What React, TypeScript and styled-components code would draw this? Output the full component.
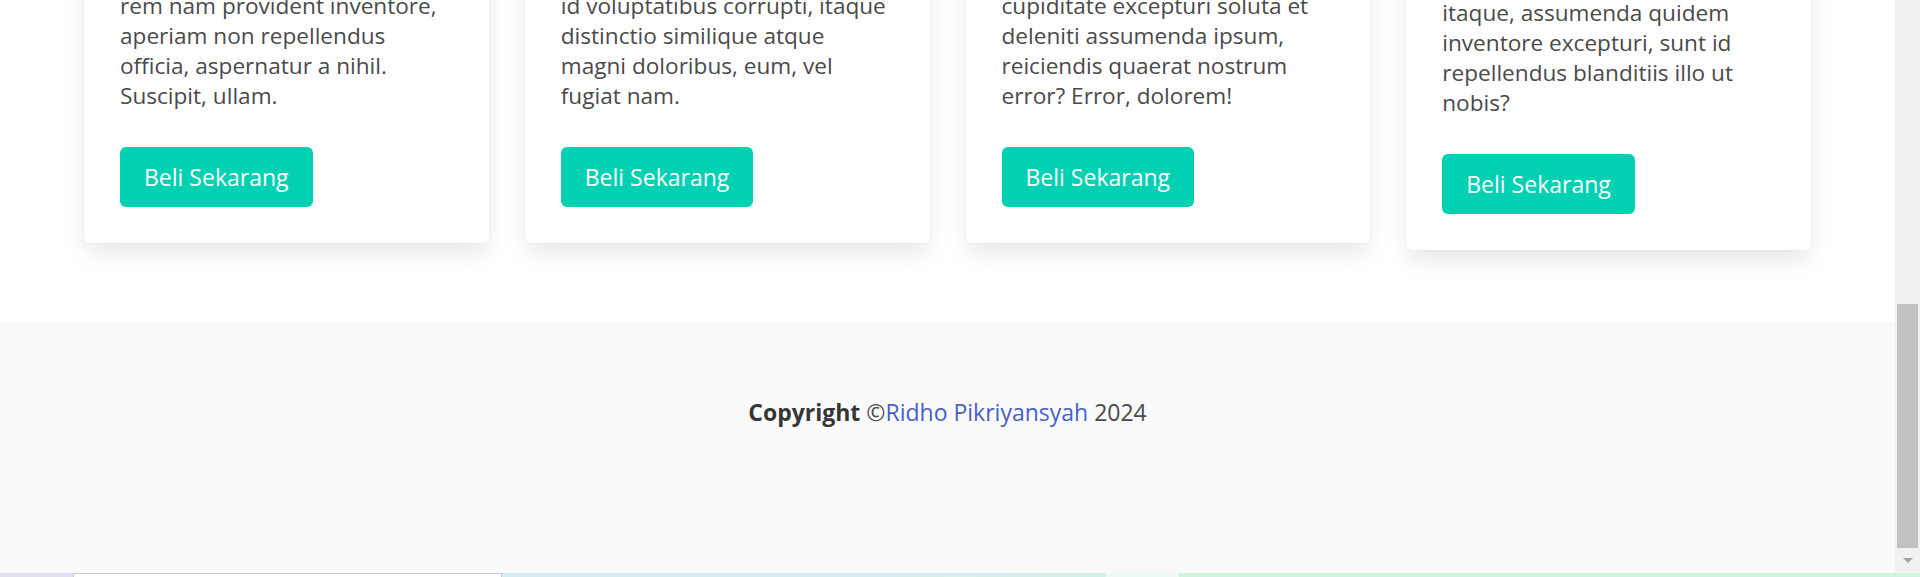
import styled, { createGlobalStyle } from "styled-components";

const GlobalStyle = createGlobalStyle`
  html, body {
    margin: 0;
    padding: 0;
    overflow: hidden;
    background: #ffffff;
  }
  * {
    box-sizing: border-box;
  }
`;

const Screen = styled.div`
  width: 1920px;
  height: 577px;
  display: flex;
  flex-direction: column;
  font-family: "Open Sans", "Noto Sans", sans-serif;
`;

const Window = styled.div`
  height: 573px;
  display: flex;
  overflow: hidden;
`;

const Page = styled.main`
  flex: 1;
  overflow: hidden;
  background: #ffffff;
`;

const Section = styled.section`
  padding: 0 84px 72px;
`;

const Grid = styled.div`
  display: grid;
  grid-template-columns: repeat(4, 1fr);
  gap: 36px;
  align-items: start;
  margin-top: -45px;
`;

const Card = styled.div<{ $shift?: number }>`
  background: #ffffff;
  border-radius: 6px;
  box-shadow: 0 12px 24px -3px rgba(10, 10, 10, 0.1),
    0 0 0 1px rgba(10, 10, 10, 0.02);
  padding: ${(p) => 36 + (p.$shift ?? 0)}px 36px 36px;
`;

const Text = styled.p`
  margin: 0 0 36px;
  font-size: 22.6px;
  line-height: 30px;
  color: #4a4a4a;
`;

const Line = styled.span`
  display: block;
  white-space: nowrap;
`;

const BuyButton = styled.button`
  display: inline-flex;
  align-items: center;
  height: 60px;
  padding: 0 24px;
  border: none;
  border-radius: 6px;
  background: #00d1b2;
  color: #ffffff;
  font-family: inherit;
  font-size: 23px;
  cursor: pointer;
`;

const Footer = styled.footer`
  background: #fafafa;
  padding: 72px 24px 144px;
  text-align: center;
  font-size: 23px;
  line-height: 36px;
  color: #4a4a4a;
`;

const Strong = styled.strong`
  color: #363636;
  font-weight: 700;
`;

const Link = styled.a`
  color: #485fc7;
  text-decoration: none;
`;

const Scrollbar = styled.div`
  width: 25px;
  background: #f1f1f1;
  display: flex;
  flex-direction: column;
  justify-content: flex-end;
`;

const Thumb = styled.div`
  height: 244px;
  margin: 0 2px;
  background: #c1c1c1;
`;

const ArrowButton = styled.div`
  height: 25px;
  display: flex;
  align-items: center;
  justify-content: center;
`;

const Triangle = styled.div`
  width: 0;
  height: 0;
  border-left: 5px solid transparent;
  border-right: 5px solid transparent;
  border-top: 5px solid #a3a3a3;
`;

const Strip = styled.div`
  height: 4px;
  display: flex;
`;

const Segment = styled.div<{ $w?: number; $bg: string; $framed?: boolean }>`
  ${(p) => (p.$w ? `width: ${p.$w}px;` : "flex: 1;")}
  background: ${(p) => p.$bg};
  ${(p) =>
    p.$framed
      ? "border: 1px solid #c6c6c6; border-bottom: none; background: #ffffff;"
      : ""}
`;

const cards: { lines: string[]; shift?: number }[] = [
  {
    lines: [
      "rem nam provident inventore,",
      "aperiam non repellendus",
      "officia, aspernatur a nihil.",
      "Suscipit, ullam.",
    ],
  },
  {
    lines: [
      "id voluptatibus corrupti, itaque",
      "distinctio similique atque",
      "magni doloribus, eum, vel",
      "fugiat nam.",
    ],
  },
  {
    lines: [
      "cupiditate excepturi soluta et",
      "deleniti assumenda ipsum,",
      "reiciendis quaerat nostrum",
      "error? Error, dolorem!",
    ],
  },
  {
    lines: [
      "itaque, assumenda quidem",
      "inventore excepturi, sunt id",
      "repellendus blanditiis illo ut",
      "nobis?",
    ],
    shift: 7,
  },
];

export default function App() {
  return (
    <>
      <GlobalStyle />
      <Screen>
        <Window>
          <Page>
            <Section>
              <Grid>
                {cards.map((card, i) => (
                  <Card key={i} $shift={card.shift}>
                    <Text>
                      {card.lines.map((l) => (
                        <Line key={l}>{l}</Line>
                      ))}
                    </Text>
                    <BuyButton>Beli Sekarang</BuyButton>
                  </Card>
                ))}
              </Grid>
            </Section>
            <Footer>
              <Strong>Copyright</Strong> ©<Link href="#">Ridho Pikriyansyah</Link> 2024
            </Footer>
          </Page>
          <Scrollbar>
            <Thumb />
            <ArrowButton>
              <Triangle />
            </ArrowButton>
          </Scrollbar>
        </Window>
        <Strip>
          <Segment $w={73} $bg="#e2dfef" />
          <Segment $w={429} $bg="#ffffff" $framed />
          <Segment $w={604} $bg="linear-gradient(90deg, #d3eef1, #d3f1eb)" />
          <Segment $w={73} $bg="#edf9f5" />
          <Segment $bg="#d2f2e2" />
        </Strip>
      </Screen>
    </>
  );
}
